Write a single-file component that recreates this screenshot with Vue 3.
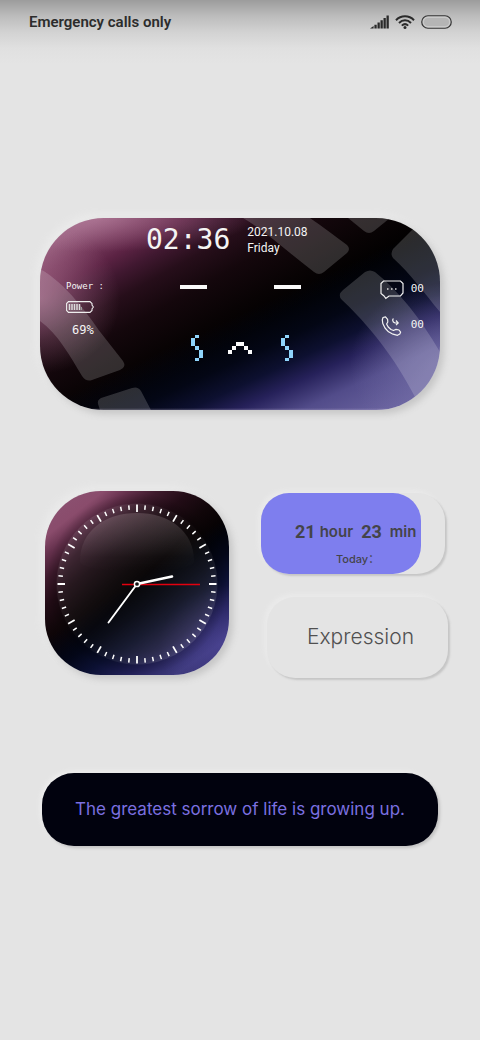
<script setup>
const status = 'Emergency calls only'
const ticks = Array.from({ length: 60 }, (_, i) => ({ angle: i * 6, major: i % 5 === 0 }))
</script>

<template>
  <div class="screen">
    <header class="status">
      <span class="carrier">{{ status }}</span>
      <div class="status-icons">
        <svg class="signal" viewBox="0 0 19 14" aria-label="Signal">
          <path d="M0 13.4 L3.6 11 V13.4 Z M4.4 9.8 H6.7 V13.4 H4.4 Z M7.5 7.6 H9.8 V13.4 H7.5 Z M10.5 5.2 H12.8 V13.4 H10.5 Z M13.5 3 H15.8 V13.4 H13.5 Z M16.5 0.5 H18.8 V13.4 H16.5 Z" fill="#2a2a2a" />
        </svg>
        <svg class="wifi" viewBox="0 0 20 14" aria-label="Wi-Fi">
          <g fill="none" stroke="#2a2a2a" stroke-width="2">
            <path d="M1 5.2 C6 0 14 0 19 5.2" />
            <path d="M4 8 C7.5 4.4 12.5 4.4 16 8" />
            <path d="M6.8 10.6 C8.8 8.7 11.2 8.7 13.2 10.6" />
          </g>
          <circle cx="10" cy="12.4" r="1.5" fill="#2a2a2a" />
        </svg>
        <svg class="cell" viewBox="0 0 31 14" aria-label="Battery">
          <rect x="0.75" y="0.75" width="29.5" height="12.5" rx="6.2" fill="#c9c9c9" stroke="#333" stroke-width="1.2" />
          <rect x="3" y="3" width="25" height="8" rx="4" fill="#b5b5b5" />
        </svg>
      </div>
    </header>

    <main class="widgets">
      <section class="panel">
        <svg class="bands" viewBox="0 0 400 192" preserveAspectRatio="none" aria-hidden="true">
          <g fill="#fff" fill-opacity="0.17">
            <path d="M0 51 C26 65 49 98 61 115 L83 143 Q87 149 80 152 L52 162 Q46 164 42 158 C30 138 18 116 0 103 Z" />
            <path d="M60 192 L58 186 Q57 182 61 180 L92 170 Q98 168 101 173 L111 192 Z" />
            <path d="M203 0 H270 C282 8 296 19 307 27 Q311 31 307 35 L284 54 Q279 58 274 54 C250 36 228 15 203 0 Z" />
            <path d="M308 0 L324 13 Q329 17 334 13 L350 0 Z" />
            <path d="M400 94 C385 76 370 55 353 40 Q350 36 353 31 L374 10 L400 40 Z" />
            <path d="M375 179 C360 150 338 116 302 82 Q297 77 303 72 L325 54 Q330 51 335 54 C360 74 380 100 400 134 V179 Z" />
          </g>
        </svg>
        <div class="headline">
          <time class="clock-text">02:36</time>
          <p class="date">2021.10.08<br />Friday</p>
        </div>
        <div class="panel-body">
          <div class="power">
            <span class="power-label">Power :</span>
            <svg class="battery" viewBox="0 0 28 12" aria-hidden="true">
              <path d="M2.5 0.6 H24 L26 2.5 V4 L27.4 6 L26 8 V9.5 L24 11.4 H2.5 L0.6 9.5 V2.5 Z" fill="none" stroke="#eee" stroke-width="1.1" />
              <path d="M3.5 3 V9 M6 3 V9 M8.5 3 V9 M11 3 V9 M13.5 3 V9" stroke="#ddd" stroke-width="1.5" />
              <path d="M15.5 6 V9" stroke="#999" stroke-width="1" />
            </svg>
            <span class="percent">69%</span>
          </div>
          <svg class="face" viewBox="0 0 122 76" shape-rendering="crispEdges" aria-hidden="true">
            <path d="M1 0 H28 V4 H1 Z M95 0 H122 V4 H95 Z" fill="#fafafa" />
            <path d="M49 65 h4 v4 h-4 Z M53 61 h4 v4 h-4 Z M57 57 h8 v4 h-8 Z M65 61 h4 v4 h-4 Z M69 65 h4 v4 h-4 Z" fill="#fafafa" />
            <path id="eye" d="M16 50 h4 v3 h-4 v8 h-4 v-8 h4 Z M16 61 h4 v4 h-4 Z M20 65 h4 v8 h-4 Z M16 73 h4 v3 h-4 Z" fill="#8fd4fb" />
            <use href="#eye" x="90" />
          </svg>
          <ul class="counts">
            <li>
              <svg class="msg" viewBox="0 0 24 20" aria-label="Messages">
                <path d="M3.5 1 H20.5 L23 3.5 V13 L20.5 16 H9 L5.8 18.5 L4 16 L1 13.5 V3.5 Z" fill="none" stroke="#f2f2f2" stroke-width="1.2" />
                <path d="M7 9 h1.5 M11 9 h1.5 M15 9 h1.5" stroke="#ddd" stroke-width="1.3" />
              </svg>
              <span>00</span>
            </li>
            <li>
              <svg class="call" viewBox="0 0 24 20" aria-label="Calls">
                <path d="M3 1.5 L5.5 0.8 L7.6 3.4 L7.8 6 L6.6 8 L8.2 11 L11 13.5 L13.5 14.5 L16 13.4 L19 14 L20.6 16.2 L19.8 18 L17.5 19.3 L13 18.2 L8.5 15.8 L5 12 L2.8 7.5 L2.3 4 Z" fill="none" stroke="#f2f2f2" stroke-width="1.2" stroke-linejoin="round" />
                <path d="M13.4 2.5 L12.6 4 L13.4 6 L15 7 H17.6 M16 4.5 L18.2 7 L16 9.2" fill="none" stroke="#f2f2f2" stroke-width="1.2" />
              </svg>
              <span>00</span>
            </li>
          </ul>
        </div>
      </section>

      <section class="row">
        <div class="analog">
          <svg viewBox="0 0 184 184" role="img" aria-label="Analog clock">
            <defs>
              <linearGradient id="rim" x1="0" y1="0" x2="1" y2="1">
                <stop offset="0" stop-color="#fff" stop-opacity="0.13" />
                <stop offset="0.5" stop-color="#fff" stop-opacity="0.02" />
                <stop offset="1" stop-color="#fff" stop-opacity="0.16" />
              </linearGradient>
              <linearGradient id="dome" x1="0" y1="0" x2="0" y2="1">
                <stop offset="0" stop-color="#d8c8c8" stop-opacity="0.2" />
                <stop offset="0.75" stop-color="#fff" stop-opacity="0.02" />
                <stop offset="1" stop-color="#fff" stop-opacity="0" />
              </linearGradient>
              <radialGradient id="shade">
                <stop offset="0" stop-color="#000" stop-opacity="0.5" />
                <stop offset="0.75" stop-color="#000" stop-opacity="0.3" />
                <stop offset="0.92" stop-color="#000" stop-opacity="0.12" />
                <stop offset="1" stop-color="#000" stop-opacity="0" />
              </radialGradient>
            </defs>
            <circle cx="92" cy="93" r="91" fill="url(#shade)" />
            <circle cx="92" cy="93" r="80.5" fill="url(#rim)" />
            <path d="M35 70 C35 40 60 22 92 22 C124 22 149 40 149 70 C149 84 35 84 35 70 Z" fill="url(#dome)" />
            <g stroke="#fff">
              <line
                v-for="t in ticks"
                :key="t.angle"
                x1="92"
                x2="92"
                :y1="t.major ? 13.5 : 14"
                :y2="t.major ? 21 : 18.5"
                :stroke-width="t.major ? 1.8 : 1.5"
                :transform="`rotate(${t.angle} 92 93)`"
              />
            </g>
            <line x1="77" y1="93.5" x2="155" y2="93.5" stroke="#e3000f" stroke-width="1.7" />
            <line x1="92" y1="93" x2="127" y2="85.5" stroke="#fff" stroke-width="2.6" stroke-linecap="round" />
            <line x1="92" y1="93" x2="63.5" y2="131.5" stroke="#fff" stroke-width="1.9" stroke-linecap="round" />
            <circle cx="92" cy="93" r="2.6" fill="#111" stroke="#fff" stroke-width="1.5" />
          </svg>
        </div>

        <div class="side">
          <div class="today">
            <div class="today-fill">
              <p class="elapsed"><b>21</b><span>hour</span><b>23</b><span class="min">min</span></p>
              <p class="today-label">Today：</p>
            </div>
          </div>
          <button class="expression" type="button">Expression</button>
        </div>
      </section>

      <p class="quote">The greatest sorrow of life is growing up.</p>
    </main>
  </div>
</template>

<style>
body {
  background: #e4e4e4;
}
</style>

<style scoped>
.screen {
  box-sizing: border-box;
  min-height: 100vh;
  background: linear-gradient(#9c9c9c 0, #bcbcbc 16px, #d2d2d2 32px, #e0e0e0 48px, #e4e4e4 64px);
  font-family: Roboto, "Liberation Sans", sans-serif;
}
p, ul {
  margin: 0;
  padding: 0;
  list-style: none;
}
svg {
  display: block;
}
.status {
  display: flex;
  align-items: center;
  justify-content: space-between;
  height: 44px;
  padding: 0 28px 0 29px;
}
.carrier {
  font-size: 15px;
  font-weight: 600;
  color: #2c2c2c;
}
.status-icons {
  display: flex;
  align-items: center;
  gap: 6px;
}
.signal { width: 19px; height: 14px; }
.wifi { width: 20px; height: 14px; }
.cell { width: 31px; height: 14px; }
.widgets {
  padding-top: 174px;
}
.panel {
  position: relative;
  overflow: hidden;
  margin: 0 40px;
  height: 192px;
  border-radius: 64px;
  color: #f4f4f4;
  background:
    linear-gradient(to top, rgba(200, 190, 220, 0.3), transparent 2px),
    radial-gradient(ellipse 90px 80px at 100% 76%, rgba(120, 115, 170, 0.6), transparent),
    radial-gradient(ellipse 80px 75px at 0 42%, rgba(190, 130, 160, 0.5), transparent),
    radial-gradient(ellipse 160px 34px at 14% 0, rgba(190, 135, 165, 0.5), transparent),
    linear-gradient(155deg, transparent 50%, rgba(4, 8, 26, 0.8) 62%, #0d1030 69%, #26215a 75%, #524c8a 83%, #6f68a4 96%),
    linear-gradient(151deg, #a87a94 0, #955c7c 8%, #75395b 14%, #5c2344 19%, #401830 24%, #260e1a 30%, #14070c 38%, #080304 48%, #000 56%);
}
.panel, .analog {
  box-shadow: 4px 4px 7px #c6c6c6, -4px -4px 8px #ebebeb;
}
.bands {
  position: absolute;
  inset: 0;
  width: 100%;
  height: 100%;
}
.headline {
  position: relative;
  display: flex;
  gap: 17px;
  height: 44px;
  padding-left: 106px;
  align-items: center;
}
.clock-text {
  font: 28px/32px "DejaVu Sans Mono", monospace;
}
.date {
  font-size: 12px;
  line-height: 16px;
}
.panel-body {
  position: relative;
  display: grid;
  grid-template-columns: 1fr auto 1fr;
  padding: 18px 16px 0;
}
.power {
  display: flex;
  flex-direction: column;
  align-items: flex-start;
  gap: 9px;
  padding-left: 10px;
  font-family: "DejaVu Sans Mono", monospace;
}
.power-label { font-size: 9px; line-height: 12px; }
.battery { width: 28px; height: 12px; }
.percent { padding-left: 6px; font-size: 12px; line-height: 16px; }
.face {
  width: 122px;
  height: 76px;
  margin-top: 5px;
}
.counts {
  display: flex;
  flex-direction: column;
  align-items: flex-end;
  gap: 16px;
  font: 11px/18px "DejaVu Sans Mono", monospace;
}
.counts li {
  display: flex;
  gap: 7px;
}
.msg, .call { width: 24px; height: 20px; }
.row {
  display: grid;
  grid-template-columns: 184fr 187fr;
  gap: 32px;
  margin: 81px 32px 0 45px;
}
.analog {
  aspect-ratio: 1;
  border-radius: 56px;
  overflow: hidden;
  background:
    radial-gradient(ellipse 70px 60px at 100% 84%, rgba(85, 75, 165, 0.5), transparent),
    linear-gradient(146deg, transparent 48%, rgba(4, 8, 30, 0.8) 60%, #0b1032 68%, #222058 78%, #3e3a7c 88%, #2c2862 100%),
    linear-gradient(142deg, #8c5474 0, #8a4c6c 14%, #64304c 20%, #3e1a2c 27%, #220c16 35%, #100609 44%, #000 56%);
}
.side {
  display: flex;
  flex-direction: column;
  gap: 23px;
  padding-top: 2px;
}
.today, .expression {
  border-radius: 28px;
  background: #e4e4e4;
  box-shadow: 2px 2px 2px #c6c6c6, -3px -3px 4px #eaeaea;
}
.today {
  margin-right: 3px;
}
.today-fill {
  box-sizing: border-box;
  width: 87%;
  height: 81px;
  padding-top: 26px;
  border-radius: 28px;
  background: #7e7eee;
  color: #444449;
}
.elapsed {
  display: flex;
  align-items: center;
  padding-left: 34px;
  font: 600 15px/26px Inter, sans-serif;
  white-space: nowrap;
}
.elapsed b {
  font: bold 18px/26px Roboto, sans-serif;
}
.elapsed span { margin: 0 8px 0 4px; }
.elapsed .min { margin: 0 0 0 8px; }
.today-label {
  padding-left: 75px;
  font: 500 11px/28px Inter, "Noto Sans CJK SC", sans-serif;
}
.expression {
  height: 81px;
  margin-left: 6px;
  padding: 0 0 2px 6px;
  border: 0;
  color: #505050;
  font: 300 21px/28px Inter, sans-serif;
}
.quote {
  margin: 95px 42px 0;
  padding: 24px 20px;
  border-radius: 32px;
  background: #01020e;
  box-shadow: 2px 2px 3px #c2c2c2, -2px -2px 4px #eeeeee;
  color: #7b70e0;
  font: 17px/25px Inter, sans-serif;
  text-align: center;
  white-space: nowrap;
}
</style>
